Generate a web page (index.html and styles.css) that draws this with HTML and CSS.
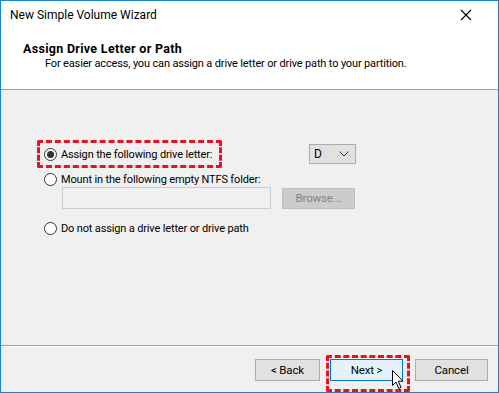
FILE: index.html
```html
<!DOCTYPE html>
<html>
<head>
    <title>New Simple Volume Wizard</title>
    <link rel="stylesheet" href="styles.css">
</head>
<body>
    <div class="window">
        <div class="title-bar">
            <span class="title">New Simple Volume Wizard</span>
            <svg class="close" width="12" height="12" viewBox="0 0 12 12">
                <path d="M1 1 L11 11 M11 1 L1 11" stroke="#000" stroke-width="1.1" fill="none"/>
            </svg>
        </div>
        <div class="header">
            <div class="heading">Assign Drive Letter or Path</div>
            <div class="subheading">For easier access, you can assign a drive letter or drive path to your partition.</div>
        </div>
        <div class="content">
            <div class="row row-first">
                <label class="option">
                    <span class="radio checked"></span>
                    Assign the following drive letter:
                </label>
                <div class="select">
                    <span>D</span>
                    <svg width="10" height="6" viewBox="0 0 10 6">
                        <path d="M0.5 0.5 L5 5 L9.5 0.5" stroke="#333" stroke-width="1" fill="none"/>
                    </svg>
                </div>
                <!-- annotation box -->
                <div class="mark mark-option"></div>
            </div>
            <div class="row row-mount">
                <label class="option">
                    <span class="radio"></span>
                    Mount in the following empty NTFS folder:
                </label>
            </div>
            <div class="row row-folder">
                <div class="textbox"></div>
                <div class="button disabled">Browse...</div>
            </div>
            <div class="row row-last">
                <label class="option">
                    <span class="radio"></span>
                    Do not assign a drive letter or drive path
                </label>
            </div>
        </div>
        <div class="footer">
            <div class="button">&lt; Back</div>
            <div class="button primary">
                Next &gt;
                <div class="mark mark-next"></div>
                <svg class="cursor" width="14" height="20" viewBox="0 0 14 20">
                    <path d="M0.5 0.5 L0.5 15.5 L4 12 L6.8 18.5 L9 17.5 L6.3 11.2 L11 11.2 Z" fill="#fff" stroke="#000" stroke-width="1"/>
                </svg>
            </div>
            <div class="button">Cancel</div>
        </div>
    </div>
</body>
</html>
```

FILE: styles.css
```css
body {
    margin: 0;
    padding: 0;
    font-family: 'Roboto', 'Liberation Sans', Arial, sans-serif;
    font-size: 11px;
    letter-spacing: -0.15px;
    color: #000000;
}

.window {
    width: 499px;
    height: 393px;
    box-sizing: border-box;
    border: 1px solid #1883d7;
    display: flex;
    flex-direction: column;
    background-color: #f0f0f0;
}

.title-bar {
    height: 29px;
    background-color: #ffffff;
    display: flex;
    align-items: center;
    justify-content: space-between;
    padding: 0 26px 0 9px;
    font-size: 12px;
    letter-spacing: 0;
}

.title {
    margin-top: -1px;
}

.close {
    margin-top: -1px;
}

.header {
    height: 60px;
    background-color: #ffffff;
    border-bottom: 1px solid #a0a0a0;
    padding-left: 22px;
    padding-top: 11px;
    box-sizing: border-box;
}

.heading {
    font-weight: bold;
    font-size: 12.5px;
    line-height: 15px;
    letter-spacing: 0.3px;
}

.subheading {
    padding-left: 22px;
    line-height: 15px;
}

.content {
    height: 256px;
    border-bottom: 1px solid #a0a0a0;
    box-shadow: 0 1px 0 #ffffff;
    padding: 53px 0 0 43px;
    box-sizing: border-box;
}

.row {
    display: flex;
    align-items: center;
    position: relative;
}

.row-first {
    height: 22px;
    justify-content: space-between;
    width: 312px;
}

.row-mount {
    margin-top: 7px;
}

.row-folder {
    padding-left: 18px;
    gap: 11px;
}

.row-last {
    margin-top: 12px;
}

.option {
    display: flex;
    align-items: center;
    gap: 4px;
    height: 15px;
    white-space: nowrap;
}

.radio {
    width: 11px;
    height: 11px;
    border: 1px solid #333333;
    border-radius: 50%;
    background-color: #ffffff;
    display: flex;
    align-items: center;
    justify-content: center;
}

.radio.checked::after {
    content: "";
    width: 7px;
    height: 7px;
    border-radius: 50%;
    background-color: #333333;
}

.select {
    width: 47px;
    height: 20px;
    border: 1px solid #adadad;
    background-color: #e1e1e1;
    display: flex;
    align-items: center;
    justify-content: space-between;
    padding: 0 6px 0 4px;
    box-sizing: border-box;
    font-size: 12px;
}

.textbox {
    width: 209px;
    height: 22px;
    box-sizing: border-box;
    border: 1px solid #cccccc;
    background-color: #f0f0f0;
}

.button {
    height: 21px;
    box-sizing: border-box;
    border: 1px solid #adadad;
    background-color: #e1e1e1;
    display: flex;
    align-items: center;
    justify-content: center;
    position: relative;
    font-size: 11.5px;
}

.row-folder .button {
    width: 73px;
}

.button.disabled {
    background-color: #cccccc;
    border-color: #bfbfbf;
    color: #838383;
}

.footer {
    height: 46px;
    display: flex;
    align-items: center;
    justify-content: flex-end;
    gap: 10px;
    padding: 2px 10px 0 0;
    box-sizing: border-box;
}

.footer .button {
    width: 65px;
    height: 22px;
}

.footer .button.primary {
    width: 73px;
    border-color: #0078d7;
    background-color: #e5f1fb;
}

.footer .button:last-child {
    width: 73px;
    margin-left: 2px;
}

.mark {
    position: absolute;
    border: 3px dashed #e81123;
    border-radius: 2px;
    pointer-events: none;
}

.mark-option {
    left: -7px;
    top: -3px;
    width: 179px;
    height: 22px;
}

.mark-next {
    left: -5px;
    top: -5px;
    width: 78px;
    height: 31px;
}

.cursor {
    position: absolute;
    left: 61px;
    top: 10px;
}
```
